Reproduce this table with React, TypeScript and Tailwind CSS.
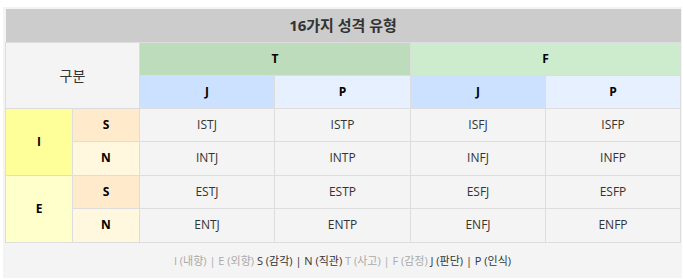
const rows = [
  { ie: "I", sn: "S", types: ["ISTJ", "ISTP", "ISFJ", "ISFP"] },
  { ie: "I", sn: "N", types: ["INTJ", "INTP", "INFJ", "INFP"] },
  { ie: "E", sn: "S", types: ["ESTJ", "ESTP", "ESFJ", "ESFP"] },
  { ie: "E", sn: "N", types: ["ENTJ", "ENTP", "ENFJ", "ENFP"] },
];

const cell = "border border-[#dddddd] text-center align-middle";

export default function App() {
  return (
    <div className="min-h-screen bg-white pl-[3px] pt-[7px] font-['Open_Sans','Noto_Sans_CJK_KR',sans-serif]">
      <div className="w-[679px] bg-[#f4f4f4] p-[2px]">
        <table className="w-[675px] table-fixed border-collapse text-[12px] text-[#333]">
          <colgroup>
            <col className="w-[67px]" />
            <col className="w-[67px]" />
            <col className="w-[135px]" />
            <col className="w-[136px]" />
            <col className="w-[135px]" />
            <col className="w-[135px]" />
          </colgroup>
          <thead>
            <tr className="h-[33px]">
              <th colSpan={6} className="bg-[#cccccc] text-center text-[15px] font-bold text-[#333]">
                16가지 성격 유형
              </th>
            </tr>
            <tr className="h-[33px]">
              <th colSpan={2} rowSpan={2} className={`${cell} bg-[#f4f4f4] text-[14px] font-normal text-[#333]`}>
                구분
              </th>
              <th colSpan={2} className={`${cell} bg-[#bcdcbc] font-bold text-black`}>T</th>
              <th colSpan={2} className={`${cell} bg-[#cdeccd] font-bold text-black`}>F</th>
            </tr>
            <tr className="h-[33px]">
              <th className={`${cell} bg-[#cce0ff] font-bold text-black`}>J</th>
              <th className={`${cell} bg-[#e6f0ff] font-bold text-black`}>P</th>
              <th className={`${cell} bg-[#cce0ff] font-bold text-black`}>J</th>
              <th className={`${cell} bg-[#e6f0ff] font-bold text-black`}>P</th>
            </tr>
          </thead>
          <tbody>
            {rows.map((r, i) => (
              <tr key={r.types[0]} className="h-[33.5px]">
                {i % 2 === 0 && (
                  <td
                    rowSpan={2}
                    className={`${cell} font-bold text-black ${r.ie === "I" ? "bg-[#ffff99]" : "bg-[#ffffcc]"}`}
                  >
                    {r.ie}
                  </td>
                )}
                <td className={`${cell} font-bold text-black ${r.sn === "S" ? "bg-[#ffebcc]" : "bg-[#fff7de]"}`}>
                  {r.sn}
                </td>
                {r.types.map((t) => (
                  <td key={t} className={`${cell} bg-[#f4f4f4] text-[#333]`}>
                    {t}
                  </td>
                ))}
              </tr>
            ))}
          </tbody>
        </table>
        <div className="pt-[9px] pb-[6px] text-center text-[11px] leading-[18px]">
          <span className="text-[#aaaaaa]">I (내향) | E (외향)</span>{" "}
          <span className="text-[#333]">S (감각) | N (직관)</span>{" "}
          <span className="text-[#aaaaaa]">T (사고) | F (감정)</span>{" "}
          <span className="text-[#333]">J (판단) | P (인식)</span>
        </div>
      </div>
    </div>
  );
}
